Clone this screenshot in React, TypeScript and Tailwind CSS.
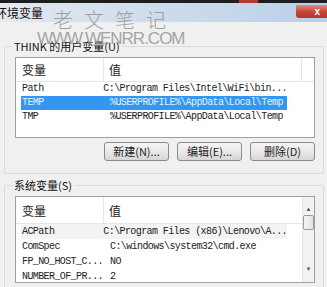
import React from "react";

const cjk = "font-['Noto_Sans_CJK_SC','Noto_Sans',sans-serif]";
const mono = "font-['Liberation_Mono','Noto_Sans_CJK_SC',monospace]";

type Row = { name: string; value: string; selected?: boolean; focus?: boolean };

const userVars: Row[] = [
  { name: "Path", value: "C:\\Program Files\\Intel\\WiFi\\bin..." },
  { name: "TEMP", value: "%USERPROFILE%\\AppData\\Local\\Temp", selected: true },
  { name: "TMP", value: "%USERPROFILE%\\AppData\\Local\\Temp" },
];

const sysVars: Row[] = [
  { name: "ACPath", value: "C:\\Program Files (x86)\\Lenovo\\A...", focus: true },
  { name: "ComSpec", value: "C:\\windows\\system32\\cmd.exe" },
  { name: "FP_NO_HOST_C...", value: "NO" },
  { name: "NUMBER_OF_PR...", value: "2" },
];

function Header({ scroll }: { scroll?: boolean }) {
  return (
    <div className={`flex h-[24px] border-b border-[#e3e6ea] ${scroll ? "w-[286px]" : ""}`}>
      <div className={`w-[88px] pl-[6px] border-r border-[#e3e6ea] text-[12px] leading-[24px] text-[#222] ${cjk}`}>变量</div>
      <div className={`w-[198px] pl-[5px] border-r border-[#e3e6ea] text-[12px] leading-[24px] text-[#222] ${cjk}`}>值</div>
      <div className="flex-1" />
    </div>
  );
}

function Rows({ rows, h }: { rows: Row[]; h: string }) {
  return (
    <>
      {rows.map((r) => (
        <div key={r.name} className={`${h} flex`}>
          <div
            className={`ml-[5px] w-[266px] flex whitespace-nowrap text-[10px] tracking-[-0.6px] ${mono} ${
              r.selected ? "bg-[#3397f2] text-[#e4f2ff]" : r.focus ? "bg-[#f3f3f3] text-[#222]" : "text-[#222]"
            }`}
          >
            <div className="w-[83px] pl-[1px] overflow-visible">{r.name}</div>
            <div className="pl-[6px]">{r.value}</div>
          </div>
        </div>
      ))}
    </>
  );
}

function GroupLabel({ text }: { text: string }) {
  return (
    <div className="flex items-center h-[14px]">
      <div className="w-[8px] h-px bg-[#d8dde2]" />
      <span className={`px-[2px] text-[11px] leading-[14px] text-[#111] ${cjk}`}>{text}</span>
      <div className="flex-1 h-px bg-[#d8dde2]" />
    </div>
  );
}

function Btn({ label }: { label: string }) {
  return (
    <div
      className={`w-[65px] h-[19px] rounded-[3px] border border-[#8a8a8a] bg-gradient-to-b from-[#f4f4f4] via-[#e9e9e9] to-[#d6d6d6] flex items-center justify-center text-[11px] text-[#222] ${cjk}`}
    >
      {label}
    </div>
  );
}

export default function App() {
  return (
    <div className="relative w-[327px] h-[287px] overflow-hidden bg-[#f0f0f0]">
      <div className="h-[3px] bg-[#1e1e1e] flex">
        <div className="ml-[239px] w-[19px] bg-[#b23a32]" />
      </div>
      <div className="h-[19px] flex items-start justify-between bg-gradient-to-r from-[#e3e9ef] via-[#cddceb] to-[#b9d0e9]">
        <span className={`-ml-[5px] mt-[2px] text-[12px] leading-[15px] text-[#111] ${cjk}`}>环境变量</span>
        <div className="mt-[2px] w-[31px] h-[13px] rounded-bl-[3px] bg-gradient-to-b from-[#e28b7f] via-[#c8473a] to-[#b8372c] flex items-center justify-end pr-[7px] text-white text-[10px] font-bold leading-none font-['Liberation_Sans',sans-serif]">
          x
        </div>
      </div>

      <div className="pl-[4px] pr-[3px]">
        <div className="mt-[17px]">
          <GroupLabel text="THINK 的用户变量(U)" />
          <div className="border-l border-r border-b border-[#d8dde2] pb-[12px] -mt-[7px] pt-[7px]">
            <div className="ml-[10px] mt-[4px] w-[300px] h-[81px] border border-[#9aa0a6] bg-white overflow-hidden">
              <Header />
              <Rows rows={userVars} h="h-[14px] leading-[14px]" />
            </div>
            <div className="flex justify-end gap-[8px] mr-[8px] mt-[4px]">
              <Btn label="新建(N)..." />
              <Btn label="编辑(E)..." />
              <Btn label="删除(D)" />
            </div>
          </div>
        </div>

        <div className="mt-[4px]">
          <GroupLabel text="系统变量(S)" />
          <div className="border-l border-r border-[#d8dde2] -mt-[7px] pt-[7px] pb-[10px]">
            <div className="ml-[10px] mt-[4px] w-[300px] h-[87px] border border-[#9aa0a6] bg-white overflow-hidden flex">
              <div className="w-[286px]">
                <div className="h-[27px] flex border-b border-[#e3e6ea]">
                  <div className={`w-[88px] pl-[6px] border-r border-[#e3e6ea] text-[12px] leading-[27px] text-[#222] ${cjk}`}>变量</div>
                  <div className={`flex-1 pl-[5px] text-[12px] leading-[27px] text-[#222] ${cjk}`}>值</div>
                </div>
                <Rows rows={sysVars} h="h-[15px] leading-[15px]" />
              </div>
              <div className="w-[12px] ml-auto bg-[#f2f2f2] border-l border-[#e6e6e6] flex flex-col items-center">
                <div className="mt-[9px] text-[6px] leading-none text-[#555]">▲</div>
                <div className="mt-[3px] w-[11px] h-[15px] rounded-[2px] border border-[#9a9a9a] bg-gradient-to-r from-[#f6f6f6] to-[#e2e2e2]" />
                <div className="mt-auto mb-[10px] text-[6px] leading-none text-[#555]">▼</div>
              </div>
            </div>
          </div>
        </div>
      </div>

      <div className="absolute left-[53px] top-[8px] text-[20px] leading-[24px] tracking-[11px] text-[#8d8d8d]/80 font-['Noto_Sans_CJK_SC',sans-serif] font-light pointer-events-none">
        老文笔记
      </div>
      <div className="absolute left-[37px] top-[29px] text-[17px] leading-[20px] tracking-[-1px] text-[#8f8f8f]/80 font-['Liberation_Sans',sans-serif] pointer-events-none">
        WWW.WENRR.COM
      </div>
    </div>
  );
}
